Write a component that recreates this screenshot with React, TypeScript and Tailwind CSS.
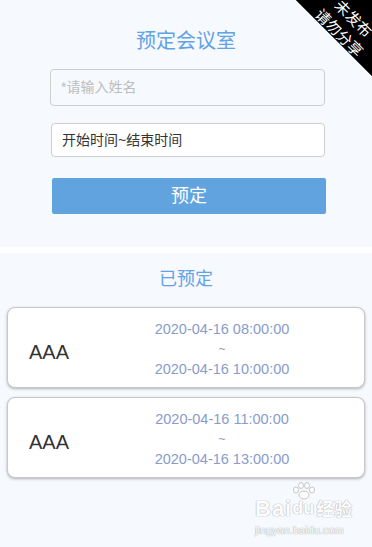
import React from "react";

const bookings = [
  { name: "AAA", start: "2020-04-16 08:00:00", end: "2020-04-16 10:00:00" },
  { name: "AAA", start: "2020-04-16 11:00:00", end: "2020-04-16 13:00:00" },
];

const BookingCard = ({ item }: { item: (typeof bookings)[number] }) => {
  return (
    <div className="flex flex-row items-center h-[81px] mx-[7px] bg-white rounded-[8px] border border-[#c8c8c8] shadow-[0_1px_3px_rgba(0,0,0,0.3)]">
      <p className="w-[146px] pl-[21px] pt-[8px] text-[20px] leading-[28px] text-[#333]">{item.name}</p>
      <div className="flex flex-col items-center w-[136px] pt-[3px] text-[14.5px] leading-[20px] text-[#8a9bcc]">
        <span>{item.start}</span>
        <span className="text-[12px]">~</span>
        <span>{item.end}</span>
      </div>
    </div>
  );
};

export default function App() {
  return (
    <div className="relative min-h-[547px] overflow-hidden bg-[#f6f9fe] font-['Liberation_Sans','Noto_Sans_CJK_SC',sans-serif]">
      {/* form */}
      <div className="flex flex-col pt-[27px] pb-[33px] border-b-[6px] border-white">
        <h1 className="text-center text-[20px] leading-[28px] text-[#62a2e6]">预定会议室</h1>
        <div className="mt-[14px] ml-[50px] w-[275px] h-[37px] flex items-center px-[10px] border border-[#cfcfcf] rounded-[4px] text-[14px] text-[#bdbdbd]">
          *请输入姓名
        </div>
        <div className="mt-[17px] ml-[51px] w-[274px] h-[34px] flex items-center px-[10px] border border-[#cfcfcf] rounded-[4px] bg-white text-[14px] text-[#333]">
          开始时间~结束时间
        </div>
        <button className="mt-[21px] ml-[52px] w-[274px] h-[36px] rounded-[2px] bg-[#60a3de] text-[18px] text-white">
          预定
        </button>
      </div>

      {/* booked list */}
      <div className="flex flex-col pt-[13px]">
        <h2 className="text-center text-[18px] leading-[26px] text-[#62a2e6]">已预定</h2>
        <div className="flex flex-col gap-[9px] mt-[15px]">
          {bookings.map((b, i) => (
            <BookingCard key={i} item={b} />
          ))}
        </div>
      </div>

      {/* corner ribbon */}
      <div className="absolute top-0 right-0 w-[76px] h-[76px] overflow-hidden">
        <div className="absolute left-[-3px] top-[-8px] w-[120px] h-[54px] rotate-45 bg-black flex flex-col items-center justify-end text-white text-[15px] leading-[20px]">
          <span>未发布</span>
          <span className="mb-[-3px]">请勿分享</span>
        </div>
      </div>

      {/* watermark */}
      <div className="absolute left-[255px] top-[497px] flex flex-col text-white [text-shadow:0_0_1px_#9a9a9a,0_0_1px_#9a9a9a] opacity-80">
        <div className="flex flex-row items-end">
          <span className="text-[22px] leading-[24px] font-bold tracking-[1px]">Bai</span>
          <div className="relative">
            <svg width="24" height="18" viewBox="0 0 24 18" className="absolute left-[0px] top-[-15px]">
              <g fill="white" stroke="#aaa" strokeWidth="0.8">
                <ellipse cx="4" cy="8" rx="2.5" ry="3" />
                <ellipse cx="9" cy="3.5" rx="2.5" ry="3" />
                <ellipse cx="15" cy="3.5" rx="2.5" ry="3" />
                <ellipse cx="20" cy="8" rx="2.5" ry="3" />
                <ellipse cx="12" cy="13" rx="5" ry="4" />
              </g>
            </svg>
            <span className="text-[18px] leading-[22px] font-bold">du</span>
          </div>
          <span className="ml-[2px] text-[18px] leading-[22px] font-bold">经验</span>
        </div>
        <span className="text-[11px] leading-[14px] mt-[2px]">jingyan.baidu.com</span>
      </div>
    </div>
  );
}
